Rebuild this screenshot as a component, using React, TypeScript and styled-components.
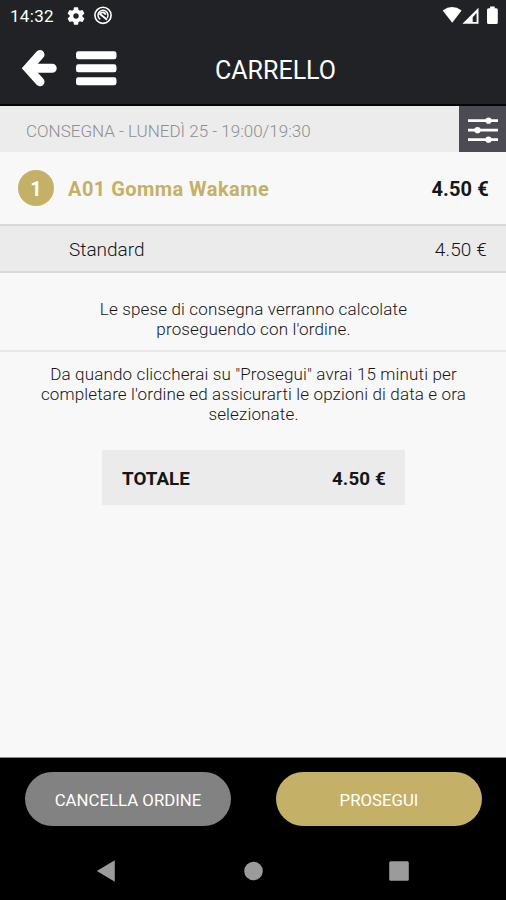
import React from "react";
import styled, { createGlobalStyle } from "styled-components";

const GlobalStyle = createGlobalStyle`
  * { box-sizing: border-box; }
  body { margin: 0; background: #f8f8f8; font-family: Roboto, "Liberation Sans", sans-serif; }
  button { font-family: inherit; border: 0; padding: 0; background: none; }
  svg { display: block; flex: none; }
`;

const Screen = styled.div`
  width: 506px;
  height: 900px;
  display: flex;
  flex-direction: column;
  overflow: hidden;
  background: #f8f8f8;
  color: #161616;
`;

const Header = styled.header`
  height: 106px;
  flex: none;
  background: #212226;
  border-bottom: 2px solid #050506;
  color: #fff;
`;

const StatusBar = styled.div`
  height: 32px;
  display: flex;
  align-items: center;
  justify-content: space-between;
  padding: 0 7px 0 10px;
`;

const StatusGroup = styled.div`
  display: flex;
  align-items: center;
  gap: 8px;
`;

const Clock = styled.span`
  width: 49px;
  font-size: 17px;
  line-height: 20px;
  letter-spacing: 0.3px;
`;

const TitleBar = styled.div`
  height: 72px;
  display: grid;
  grid-template-columns: 120px 1fr 75px;
  align-items: center;
  padding-top: 1px;
`;

const NavIcons = styled.div`
  display: flex;
  align-items: center;
  padding: 0 0 1px 20px;
  gap: 19px;
`;

const IconButton = styled.button`
  display: block;
`;

const Title = styled.h1`
  margin: 4px 0 0;
  text-align: center;
  font-size: 25px;
  line-height: 28px;
  font-weight: 400;
`;

const SlotBar = styled.div`
  height: 46px;
  flex: none;
  display: flex;
  background: #ececec;
`;

const SlotLabel = styled.div`
  flex: 1;
  padding: 1px 0 0 26px;
  line-height: 49px;
  font-size: 17px;
  font-weight: 300;
  color: #8e8e93;
  white-space: nowrap;
`;

const FilterButton = styled.button`
  width: 47px;
  display: flex;
  align-items: center;
  justify-content: center;
  padding-top: 2px;
  background: #4c4b53;
`;

const ItemRow = styled.div`
  height: 72px;
  flex: none;
  display: flex;
  align-items: center;
  padding: 1px 17px 0 18px;
  font-size: 20px;
  font-weight: 700;
`;

const Quantity = styled.span`
  width: 36px;
  height: 36px;
  margin: -1px 14px 0 0;
  border-radius: 50%;
  background: #c5b067;
  color: #fff;
  display: flex;
  align-items: center;
  justify-content: center;
  padding-top: 1px;
`;

const ItemName = styled.span`
  flex: 1;
  color: #c5b067;
  letter-spacing: 0.45px;
  white-space: nowrap;
`;

const Price = styled.span`
  letter-spacing: 0.15px;
  white-space: nowrap;
`;

const VariantRow = styled.div`
  height: 49px;
  flex: none;
  display: flex;
  align-items: center;
  justify-content: space-between;
  padding: 1px 19px 0 69px;
  border-top: 2px solid #d8d8d8;
  border-bottom: 2px solid #d8d8d8;
  background: #ebebeb;
  font-size: 19px;
  font-weight: 300;
`;

const Notice = styled.p<{ $height: number; $ruled?: boolean }>`
  height: ${(p) => p.$height}px;
  flex: none;
  margin: 0;
  display: flex;
  flex-direction: column;
  align-items: center;
  justify-content: flex-end;
  padding: 0 0 11px 1px;
  border-bottom: ${(p) => (p.$ruled ? "2px solid #e9e9e9" : "0")};
  font-size: 17px;
  line-height: 20px;
  font-weight: 300;
  letter-spacing: 0.15px;
  white-space: nowrap;
`;

const Total = styled.div`
  width: 303px;
  height: 55px;
  flex: none;
  margin: 15px 0 0 102px;
  display: flex;
  align-items: center;
  justify-content: space-between;
  padding: 2px 19px 0 20px;
  background: #ebebeb;
  font-size: 18.8px;
  font-weight: 700;
`;

const Footer = styled.footer`
  height: 143px;
  flex: none;
  margin-top: auto;
  background: #000;
  border-top: 1px solid #8a8a8a;
`;

const Actions = styled.div`
  display: flex;
  justify-content: space-between;
  padding: 14px 24px 0 25px;
`;

const ActionButton = styled.button<{ $color: string }>`
  width: 206px;
  height: 54px;
  border-radius: 27px;
  background: ${(p) => p.$color};
  color: #fff;
  font-size: 16.8px;
  line-height: 56px;
`;

const SystemNav = styled.nav`
  display: flex;
  align-items: center;
  justify-content: space-between;
  height: 23px;
  padding: 0 97px 0 96px;
  margin-top: 33px;
`;

export default function App() {
  return (
    <>
      <GlobalStyle />
      <Screen>
        <Header>
          <StatusBar>
            <StatusGroup>
              <Clock>14:32</Clock>
              <svg width="18" height="18" viewBox="2 2 20 20" fill="#fff">
                <path d="M19.14 12.94a7 7 0 0 0 0-1.88l2.03-1.58a.5.5 0 0 0 .12-.61l-1.92-3.32a.5.5 0 0 0-.59-.22l-2.39.96a7 7 0 0 0-1.62-.94l-.36-2.54A.5.5 0 0 0 13.92 2.4h-3.84a.5.5 0 0 0-.47.41l-.36 2.54a7 7 0 0 0-1.62.94l-2.39-.96a.5.5 0 0 0-.59.22L2.74 8.87a.5.5 0 0 0 .12.61l2.03 1.58a7 7 0 0 0 0 1.88l-2.03 1.58a.5.5 0 0 0-.12.61l1.92 3.32c.12.22.37.29.59.22l2.39-.96c.5.38 1.03.7 1.62.94l.36 2.54c.05.24.24.41.48.41h3.84c.24 0 .44-.17.47-.41l.36-2.54a7 7 0 0 0 1.62-.94l2.39.96c.22.08.47 0 .59-.22l1.92-3.32a.5.5 0 0 0-.12-.61zM12 15a3 3 0 1 1 0-6 3 3 0 0 1 0 6z" />
              </svg>
              <svg width="20" height="20" viewBox="0 0 20 20" fill="none" stroke="#fff">
                <circle cx="10" cy="9.3" r="8.1" strokeWidth="1.6" />
                <path d="M7.2 13.4A5 5 0 1 1 14.2 12" strokeWidth="1.5" />
                <path d="M7 7.6c2-2 5-1.4 5.7 1.2M6.4 7.5l7.7 6.2" strokeWidth="1.9" />
              </svg>
            </StatusGroup>
            <svg width="57" height="20" viewBox="0 0 57 20" fill="#fff">
              <path d="M.7 4.4Q10 -2.4 19.6 4.4L10.2 16.8z" />
              <path fillRule="evenodd" d="M20.4 17.8L36.5 1.8V17.8zM30.7 15.9h3.9V7.1l-3.9 4.1z" />
              <path d="M48.1 2.2V.6h4.6v1.6h1.6q1.5 0 1.5 1.5v12.8q0 1.5-1.5 1.5h-7.8q-1.5 0-1.5-1.5V3.7q0-1.5 1.5-1.5z" />
            </svg>
          </StatusBar>
          <TitleBar>
            <NavIcons>
              <IconButton aria-label="Indietro">
                <svg width="37" height="40" viewBox="0 0 37 40" fill="none" stroke="#fff" strokeWidth="9" strokeLinecap="round">
                  <path d="M20 6.6L7.8 20.2L20 33.8" />
                  <path d="M9 20.2H32.2" />
                </svg>
              </IconButton>
              <IconButton aria-label="Menu">
                <svg width="41" height="36" viewBox="0 0 41 36" fill="#fff">
                  <rect x="0" y="1.3" width="40.5" height="8" rx="2.4" />
                  <rect x="0" y="14.3" width="40.5" height="8" rx="2.4" />
                  <rect x="0" y="27.3" width="40.5" height="8" rx="2.4" />
                </svg>
              </IconButton>
            </NavIcons>
            <Title>CARRELLO</Title>
          </TitleBar>
        </Header>
        <SlotBar>
          <SlotLabel>CONSEGNA - LUNEDÌ 25 - 19:00/19:30</SlotLabel>
          <FilterButton aria-label="Filtri">
            <svg width="30" height="28" viewBox="0 0 30 28" fill="#fff" stroke="#fff" strokeWidth="2.8">
              <path d="M0 4.7H30M0 14.2H30M0 23.7H30" />
              <g stroke="none">
                <circle cx="20.5" cy="4.7" r="3.1" />
                <circle cx="9.5" cy="14.2" r="3.1" />
                <circle cx="20.5" cy="23.7" r="3.1" />
              </g>
            </svg>
          </FilterButton>
        </SlotBar>
        <ItemRow>
          <Quantity>1</Quantity>
          <ItemName>A01 Gomma Wakame</ItemName>
          <Price>4.50 €</Price>
        </ItemRow>
        <VariantRow>
          <span>Standard</span>
          <Price>4.50 €</Price>
        </VariantRow>
        <Notice $height={79} $ruled>
          <span>Le spese di consegna verranno calcolate</span>
          <span>proseguendo con l'ordine.</span>
        </Notice>
        <Notice $height={83}>
          <span>Da quando cliccherai su "Prosegui" avrai 15 minuti per</span>
          <span>completare l'ordine ed assicurarti le opzioni di data e ora</span>
          <span>selezionate.</span>
        </Notice>
        <Total>
          <span>TOTALE</span>
          <Price>4.50 €</Price>
        </Total>
        <Footer>
          <Actions>
            <ActionButton $color="#828282">CANCELLA ORDINE</ActionButton>
            <ActionButton $color="#c5b067">PROSEGUI</ActionButton>
          </Actions>
          <SystemNav>
            <svg width="20" height="22" viewBox="0 0 20 22" fill="#9b9b9b">
              <path d="M.8 11L18.8.3V21.7z" />
            </svg>
            <svg width="20" height="20" viewBox="0 0 20 20" fill="#9b9b9b">
              <circle cx="10.5" cy="10" r="9.3" />
            </svg>
            <svg width="20" height="20" viewBox="0 0 20 20" fill="#9b9b9b">
              <rect x=".2" y=".2" width="19.6" height="19.6" rx="1.5" />
            </svg>
          </SystemNav>
        </Footer>
      </Screen>
    </>
  );
}
